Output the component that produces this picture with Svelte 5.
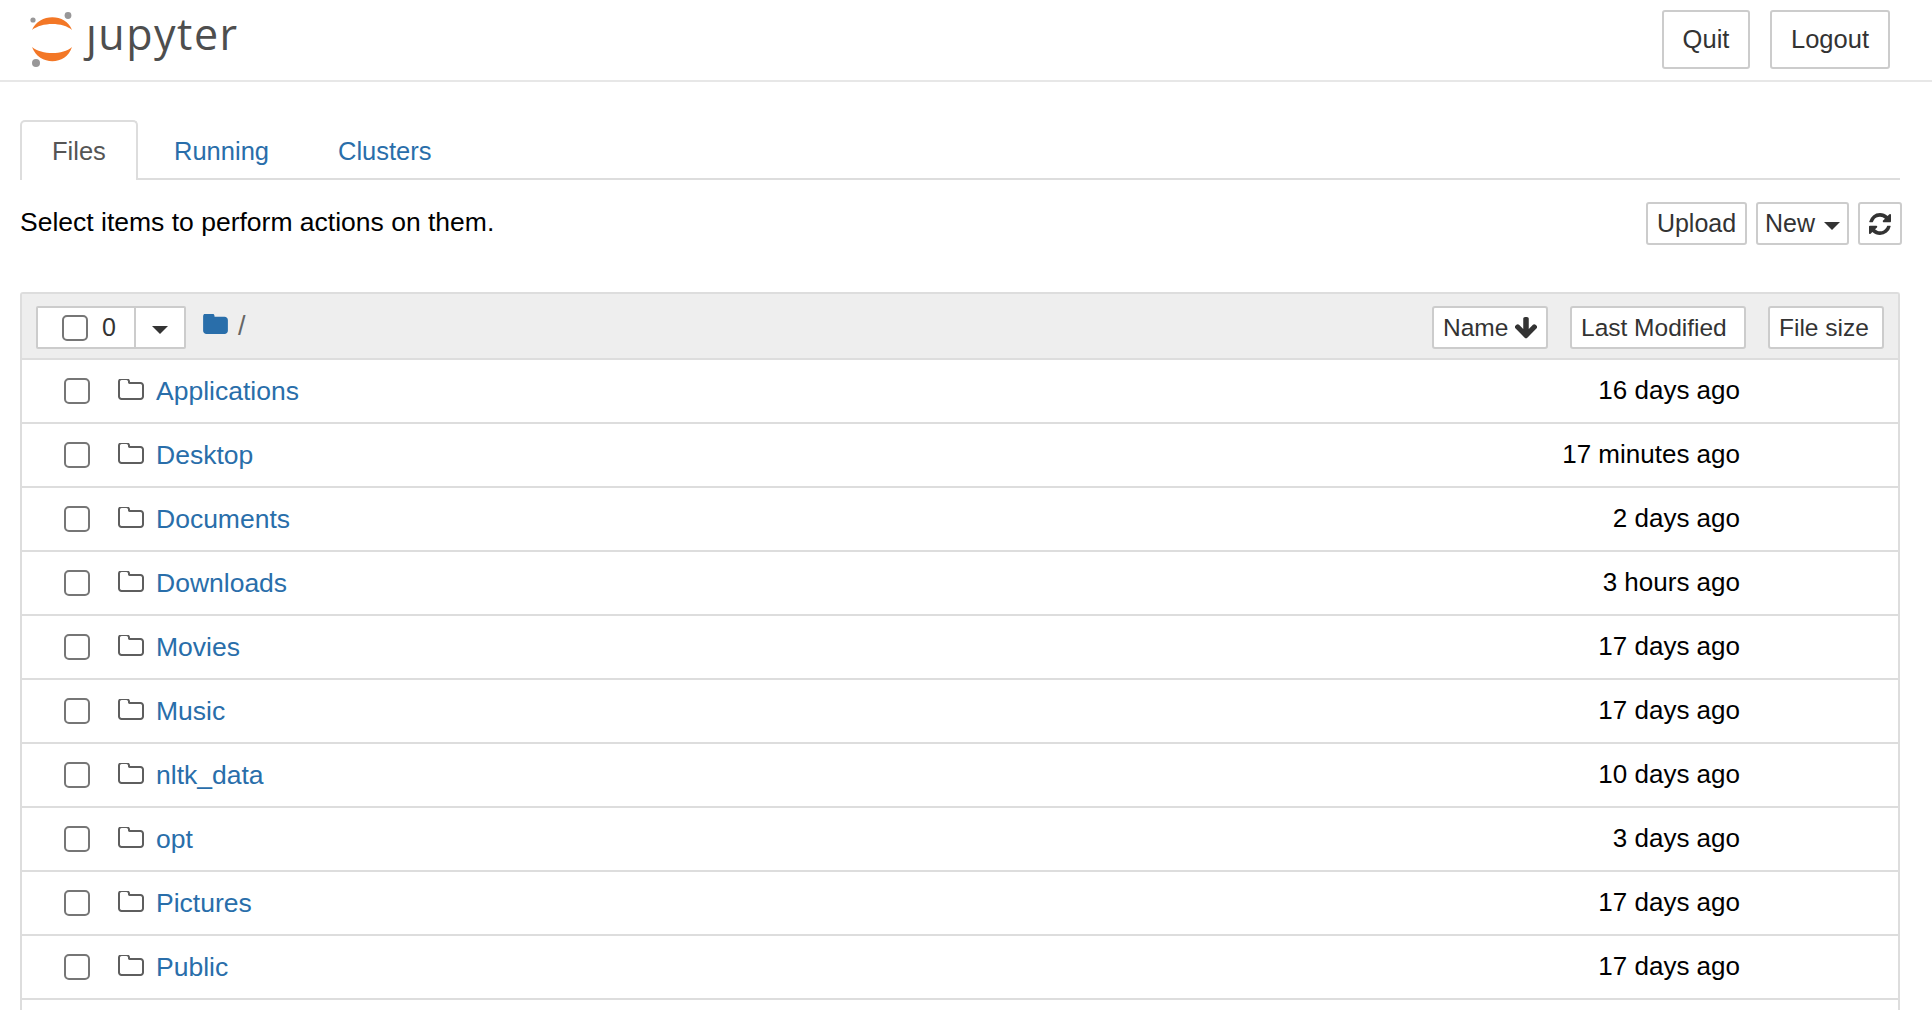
<script>
  const folders = [
    { name: "Applications", modified: "16 days ago" },
    { name: "Desktop", modified: "17 minutes ago" },
    { name: "Documents", modified: "2 days ago" },
    { name: "Downloads", modified: "3 hours ago" },
    { name: "Movies", modified: "17 days ago" },
    { name: "Music", modified: "17 days ago" },
    { name: "nltk_data", modified: "10 days ago" },
    { name: "opt", modified: "3 days ago" },
    { name: "Pictures", modified: "17 days ago" },
    { name: "Public", modified: "17 days ago" },
  ];
</script>

<div class="page">
  <header class="topbar">
    <a class="logo" href="#top">
      <svg class="logo-mark" viewBox="0 0 60 60" width="60" height="60" aria-hidden="true">
        <path class="orange" d="M8 20C15 3 42 3 48 20C39 12 18 12 8 20Z" />
        <path class="orange" d="M8 37C18 45 39 45 48 37C42 56 15 56 8 37Z" />
        <circle class="grey" cx="9" cy="10" r="2.6" />
        <circle class="grey" cx="44" cy="5.5" r="3.4" />
        <circle class="grey" cx="12" cy="53" r="4" />
      </svg>
      <span class="wordmark"><span class="dotless">j</span>upyter</span>
    </a>
    <div class="top-actions">
      <button class="btn top-btn quit">Quit</button>
      <button class="btn top-btn logout">Logout</button>
    </div>
  </header>

  <main class="content">
    <nav class="tabs">
      <a class="tab active" href="#files">Files</a>
      <a class="tab" href="#running">Running</a>
      <a class="tab" href="#clusters">Clusters</a>
    </nav>

    <div class="toolbar">
      <p class="hint">Select items to perform actions on them.</p>
      <div class="tool-buttons">
        <button class="btn small upload">Upload</button>
        <button class="btn small new">New <span class="caret"></span></button>
        <button class="btn small refresh" aria-label="Refresh">
          <svg viewBox="128 128 1536 1536" width="22" height="22" aria-hidden="true">
            <path d="M1639 1056q0 5-1 7-64 268-268 434.5t-478 166.5q-146 0-282.5-55t-243.5-157l-129 129q-19 19-45 19t-45-19-19-45v-448q0-26 19-45t45-19h448q26 0 45 19t19 45-19 45l-137 137q71 66 161 102t187 36q134 0 250-65t186-179q11-17 53-117 8-23 30-23h192q13 0 22.5 9.5t9.5 22.5zm25-800v448q0 26-19 45t-45 19h-448q-26 0-45-19t-19-45 19-45l138-138q-148-137-349-137-134 0-250 65t-186 179q-11 17-53 117-8 23-30 23h-199q-13 0-22.5-9.5t-9.5-22.5v-7q65-268 270-434.5t480-166.5q146 0 284 55.5t245 156.5l130-129q19-19 45-19t45 19 19 45z" />
          </svg>
        </button>
      </div>
    </div>

    <section class="list">
      <div class="list-head">
        <div class="select-group">
          <label class="select-count">
            <input type="checkbox" class="check" />
            <span>0</span>
          </label>
          <button class="select-menu" aria-label="Select menu"><span class="caret"></span></button>
        </div>
        <svg class="crumb-folder" viewBox="64 192 1664 1344" width="25" height="20" aria-hidden="true">
          <path d="M1728 608v704q0 92-66 158t-158 66h-1216q-92 0-158-66t-66-158v-960q0-92 66-158t158-66h320q92 0 158 66t66 158v32h672q92 0 158 66t66 158z" />
        </svg>
        <span class="crumb-slash">/</span>
        <div class="sort-buttons">
          <button class="btn small sort sort-name">Name
            <svg viewBox="128 192 1536 1408" width="22" height="22" aria-hidden="true">
              <path d="M1675 832q0 53-37 90l-651 652q-39 37-91 37-53 0-90-37l-651-652q-38-36-38-90 0-53 38-91l74-75q39-37 91-37 53 0 90 37l294 294v-704q0-52 38-90t90-38h128q52 0 90 38t38 90v704l294-294q37-37 90-37 52 0 91 37l75 75q37 39 37 91z" />
            </svg>
          </button>
          <button class="btn small sort sort-modified">Last Modified</button>
          <button class="btn small sort sort-size">File size</button>
        </div>
      </div>

      {#each folders as folder}
        <div class="row">
          <input type="checkbox" class="check" />
          <svg class="folder" viewBox="64 192 1664 1344" width="26" height="21" aria-hidden="true">
            <path d="M1600 1312v-704q0-40-28-68t-68-28h-704q-40 0-68-28t-28-68v-64q0-40-28-68t-68-28h-320q-40 0-68 28t-28 68v960q0 40 28 68t68 28h1216q40 0 68-28t28-68zm128-704v704q0 92-66 158t-158 66h-1216q-92 0-158-66t-66-158v-960q0-92 66-158t158-66h320q92 0 158 66t66 158v32h672q92 0 158 66t66 158z" />
          </svg>
          <a class="name" href="#folder">{folder.name}</a>
          <span class="modified">{folder.modified}</span>
        </div>
      {/each}
    </section>
  </main>
</div>

<style>
  :global(body) {
    margin: 0;
    background: #fff;
    overflow: hidden;
  }

  .page {
    height: 100vh;
    display: flex;
    flex-direction: column;
    overflow: hidden;
    font-family: "Liberation Sans", Arial, sans-serif;
    font-size: 26.5px;
    color: #000;
  }

  a {
    color: #296eaa;
    text-decoration: none;
  }

  .btn {
    box-sizing: border-box;
    margin: 0;
    background: #fff;
    border: 2px solid #ccc;
    border-radius: 3px;
    color: #333;
    font: inherit;
    cursor: pointer;
  }

  /* top bar */
  .topbar {
    box-sizing: border-box;
    height: 82px;
    flex: none;
    display: flex;
    justify-content: space-between;
    padding: 10px 42px 0 24px;
    border-bottom: 2px solid #e7e7e7;
  }

  .logo {
    display: flex;
    align-items: flex-start;
    color: #4e4e4e;
  }

  .orange {
    fill: #f37726;
  }

  .grey {
    fill: #989798;
  }

  .wordmark {
    margin: -6px 0 0 2px;
    font-family: "Open Sans", sans-serif;
    font-size: 43px;
    line-height: 60px;
    letter-spacing: 1.5px;
  }

  .dotless {
    display: inline-block;
    clip-path: inset(20px -10px -20px -10px);
  }

  .top-actions {
    display: flex;
    gap: 20px;
  }

  .top-btn {
    height: 59px;
    font-size: 25.5px;
  }

  .quit {
    width: 88px;
  }

  .logout {
    width: 120px;
  }

  /* tabs */
  .content {
    flex: 1;
    min-height: 0;
    display: flex;
    flex-direction: column;
    padding: 38px 30px 0 20px;
  }

  .tabs {
    display: flex;
    height: 60px;
    flex: none;
    box-sizing: border-box;
    margin-right: 2px;
    border-bottom: 2px solid #ddd;
    font-size: 25.5px;
  }

  .tab {
    box-sizing: border-box;
    height: 60px;
    padding: 0 34px 0 34px;
    line-height: 58px;
    border: 2px solid transparent;
    border-bottom: 0;
  }

  .tab:nth-child(3) {
    padding-left: 31px;
  }

  .tab.active {
    width: 118px;
    padding: 0 0 0 30px;
    background: #fff;
    color: #555;
    border-color: #ddd;
    border-radius: 5px 5px 0 0;
  }

  /* toolbar */
  .toolbar {
    flex: none;
    height: 112px;
    display: flex;
    justify-content: space-between;
    align-items: flex-start;
  }

  .hint {
    margin: 25px 0 0;
    line-height: 34px;
  }

  .tool-buttons {
    display: flex;
    gap: 9px;
    margin-top: 22px;
  }

  .small {
    height: 43px;
    padding: 0;
    font-size: 25px;
    line-height: 39px;
  }

  .upload {
    width: 101px;
  }

  .new {
    width: 93px;
  }

  .refresh {
    width: 44px;
    display: flex;
    align-items: center;
    justify-content: center;
  }

  .refresh svg,
  .sort-name svg {
    fill: #333;
  }

  .caret {
    display: inline-block;
    vertical-align: 2px;
    margin-left: 2px;
    border-top: 8px solid #333;
    border-left: 8px solid transparent;
    border-right: 8px solid transparent;
  }

  /* file list */
  .list {
    flex: 1;
    min-height: 0;
    margin-right: 2px;
    border: 2px solid #ddd;
    border-bottom: 0;
    border-radius: 3px 3px 0 0;
  }

  .list-head {
    box-sizing: border-box;
    height: 66px;
    display: flex;
    align-items: flex-start;
    padding: 12px 14px 0 14px;
    background: #eee;
    border-bottom: 2px solid #ddd;
  }

  .select-group {
    box-sizing: border-box;
    height: 43px;
    display: flex;
    background: #fff;
    border: 2px solid #ccc;
    border-radius: 2px;
    color: #333;
    font-size: 25px;
  }

  .select-count {
    box-sizing: border-box;
    width: 98px;
    display: flex;
    align-items: center;
    gap: 14px;
    padding-left: 24px;
    border-right: 2px solid #ccc;
  }

  .select-menu {
    width: 48px;
    padding: 7px 2px 0 0;
    background: none;
    border: 0;
  }

  .crumb-folder {
    margin: 8px 0 0 17px;
    fill: #296eaa;
  }

  .crumb-slash {
    margin: 1px 0 0 10px;
    color: #666;
    font-size: 27px;
    line-height: 38px;
  }

  .sort-buttons {
    display: flex;
    gap: 22px;
    margin-left: auto;
  }

  .sort {
    padding-left: 9px;
    font-size: 24.5px;
    text-align: left;
  }

  .sort-name {
    width: 116px;
  }

  .sort-modified {
    width: 176px;
  }

  .sort-size {
    width: 116px;
  }

  .sort-name svg {
    vertical-align: -3px;
  }

  .check {
    appearance: none;
    box-sizing: border-box;
    flex: none;
    width: 26px;
    height: 26px;
    margin: 0;
    background: #fff;
    border: 2px solid #767676;
    border-radius: 5px;
  }

  .row {
    box-sizing: border-box;
    height: 64px;
    display: flex;
    align-items: center;
    padding-left: 42px;
    border-bottom: 2px solid #ddd;
  }

  .folder {
    flex: none;
    margin: -4px 0 0 28px;
    fill: #5e5e5e;
  }

  .name {
    margin-left: 12px;
    line-height: 34px;
  }

  .modified {
    margin: -3px 158px 0 auto;
    font-size: 26px;
    line-height: 34px;
  }
</style>
